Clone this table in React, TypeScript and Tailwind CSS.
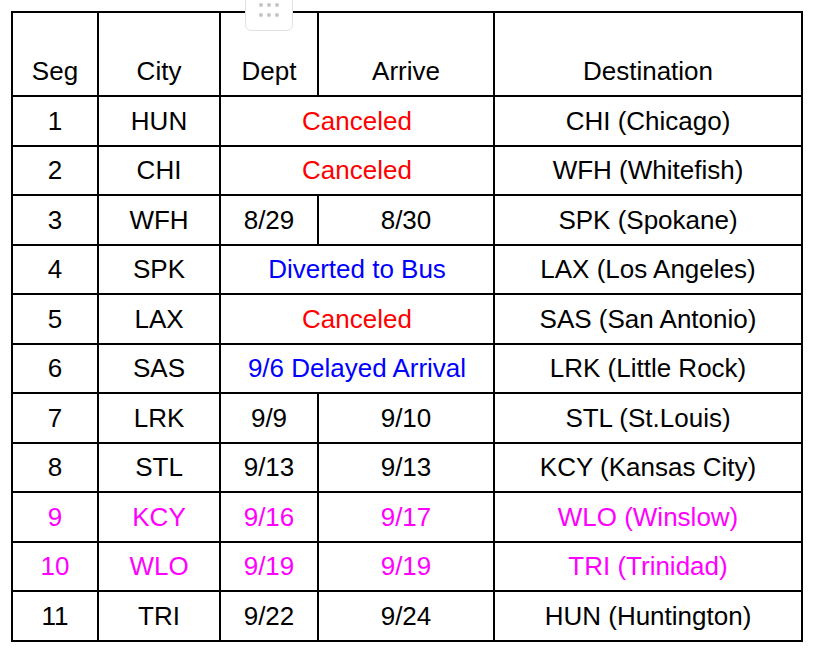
import React from "react";

type Row = {
  seg: string;
  city: string;
  dept?: string;
  arrive?: string;
  merged?: string;
  mergedColor?: string;
  dest: string;
  color?: string;
};

const rows: Row[] = [
  { seg: "1", city: "HUN", merged: "Canceled", mergedColor: "text-[#ff0000]", dest: "CHI (Chicago)" },
  { seg: "2", city: "CHI", merged: "Canceled", mergedColor: "text-[#ff0000]", dest: "WFH (Whitefish)" },
  { seg: "3", city: "WFH", dept: "8/29", arrive: "8/30", dest: "SPK (Spokane)" },
  { seg: "4", city: "SPK", merged: "Diverted to Bus", mergedColor: "text-[#0000ff]", dest: "LAX (Los Angeles)" },
  { seg: "5", city: "LAX", merged: "Canceled", mergedColor: "text-[#ff0000]", dest: "SAS (San Antonio)" },
  { seg: "6", city: "SAS", merged: "9/6 Delayed Arrival", mergedColor: "text-[#0000ff]", dest: "LRK (Little Rock)" },
  { seg: "7", city: "LRK", dept: "9/9", arrive: "9/10", dest: "STL (St.Louis)" },
  { seg: "8", city: "STL", dept: "9/13", arrive: "9/13", dest: "KCY (Kansas City)" },
  { seg: "9", city: "KCY", dept: "9/16", arrive: "9/17", dest: "WLO (Winslow)", color: "text-[#ff00ff]" },
  { seg: "10", city: "WLO", dept: "9/19", arrive: "9/19", dest: "TRI (Trinidad)", color: "text-[#ff00ff]" },
  { seg: "11", city: "TRI", dept: "9/22", arrive: "9/24", dest: "HUN (Huntington)" },
];

const base = "border-2 border-black text-center p-0";
const cell = `${base} align-middle`;
const head = `${base} align-bottom font-normal pb-[11px]`;

export default function App() {
  return (
    <div
      className="relative w-[816px] h-[658px] bg-white overflow-hidden text-black"
      style={{ fontFamily: '"Liberation Sans", Arial, sans-serif' }}
    >
      <div className="pt-[11px] pl-[11px]">
        <table className="border-collapse table-fixed w-[790px] text-[26px] leading-none">
          <colgroup>
            <col className="w-[86px]" />
            <col className="w-[122px]" />
            <col className="w-[98px]" />
            <col className="w-[176px]" />
            <col className="w-[308px]" />
          </colgroup>
          <thead>
            <tr className="h-[84px]">
              <th className={head}>Seg</th>
              <th className={head}>City</th>
              <th className={head}>Dept</th>
              <th className={head}>Arrive</th>
              <th className={head}>Destination</th>
            </tr>
          </thead>
          <tbody>
            {rows.map((r) => (
              <tr key={r.seg} className={`h-[49.5px] ${r.color ?? ""}`}>
                <td className={cell}>{r.seg}</td>
                <td className={cell}>{r.city}</td>
                {r.merged ? (
                  <td colSpan={2} className={`${cell} ${r.mergedColor}`}>
                    {r.merged}
                  </td>
                ) : (
                  <>
                    <td className={cell}>{r.dept}</td>
                    <td className={cell}>{r.arrive}</td>
                  </>
                )}
                <td className={cell}>{r.dest}</td>
              </tr>
            ))}
          </tbody>
        </table>
      </div>

      <div className="absolute left-[245px] top-[-10px] w-[48px] h-[41px] rounded-[6px] border border-[#e2e2e2] bg-white flex flex-col items-center justify-end pb-[13px] gap-[6px]">
        <div className="flex gap-[4px]">
          <span className="w-[4px] h-[4px] rounded-full bg-[#c4c4c4]" />
          <span className="w-[4px] h-[4px] rounded-full bg-[#c4c4c4]" />
          <span className="w-[4px] h-[4px] rounded-full bg-[#c4c4c4]" />
        </div>
        <div className="flex gap-[4px]">
          <span className="w-[4px] h-[4px] rounded-full bg-[#c4c4c4]" />
          <span className="w-[4px] h-[4px] rounded-full bg-[#c4c4c4]" />
          <span className="w-[4px] h-[4px] rounded-full bg-[#c4c4c4]" />
        </div>
      </div>
    </div>
  );
}
